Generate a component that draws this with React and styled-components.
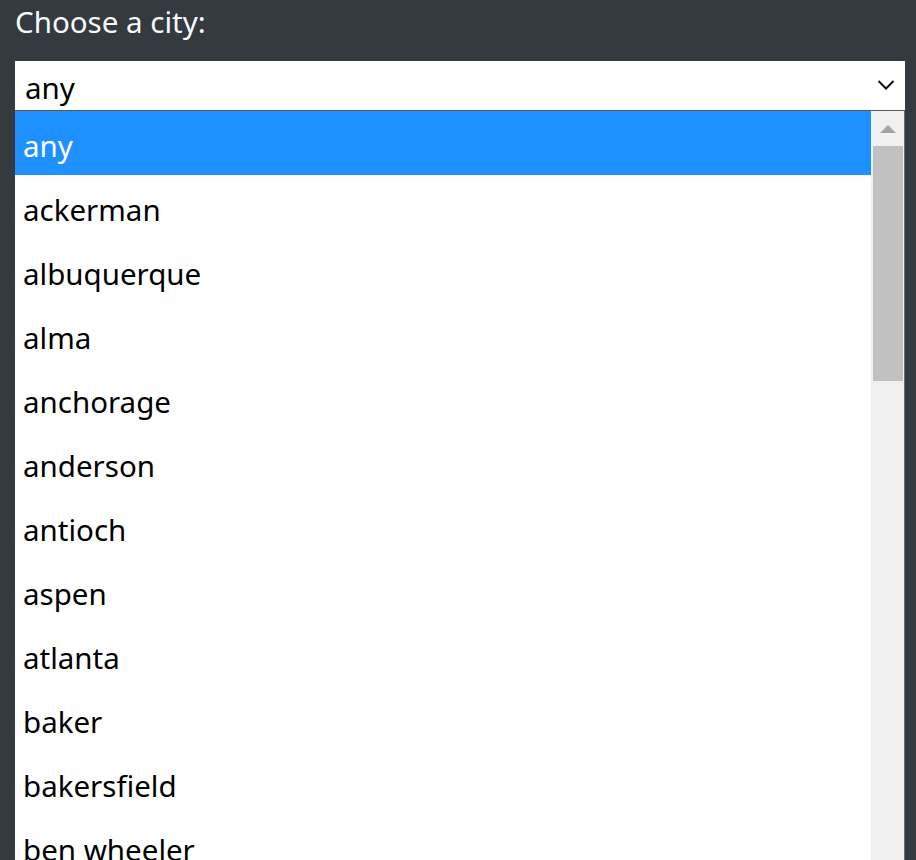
import React from "react";
import styled, { createGlobalStyle } from "styled-components";

const cities = [
  "any",
  "ackerman",
  "albuquerque",
  "alma",
  "anchorage",
  "anderson",
  "antioch",
  "aspen",
  "atlanta",
  "baker",
  "bakersfield",
  "ben wheeler",
  "berkeley",
];

const GlobalStyle = createGlobalStyle`
  html, body {
    margin: 0;
    padding: 0;
    background: #343a40;
    overflow: hidden;
  }
  body {
    font-family: "Noto Sans", "Open Sans", sans-serif;
  }
`;

const Page = styled.div`
  height: 860px;
  padding: 0 11px 0 15px;
  display: flex;
  flex-direction: column;
`;

const Label = styled.label`
  color: #f8f9fa;
  font-size: 29.5px;
  line-height: 44px;
  margin-bottom: 17px;
`;

const SelectBox = styled.div`
  height: 50px;
  background: #fff;
  border-bottom: 1px solid #5a5a5a;
  display: flex;
  align-items: center;
  justify-content: space-between;
  padding: 3px 10px 0 10px;
  box-sizing: border-box;
  font-size: 29.5px;
  color: #000;
`;

const Chevron = styled.svg`
  width: 18px;
  height: 12px;
  margin-bottom: 4px;
`;

const ListBox = styled.div`
  flex: 1;
  display: flex;
  background: #fff;
  border-right: 1px solid #6c6c6c;
  overflow: hidden;
`;

const Options = styled.ul`
  list-style: none;
  margin: 0;
  padding: 0;
  flex: 1;
`;

const Option = styled.li`
  height: 64px;
  display: flex;
  align-items: center;
  padding: 5px 0 0 8px;
  box-sizing: border-box;
  font-size: 29.5px;
  color: ${(p) => (p.selected ? "#fff" : "#000")};
  background: ${(p) => (p.selected ? "#1e90ff" : "transparent")};
`;

const Track = styled.div`
  width: 33px;
  background: #f0f0f0;
  display: flex;
  flex-direction: column;
  align-items: center;
`;

const ArrowUp = styled.div`
  margin-top: 14px;
  width: 0;
  height: 0;
  border-left: 8px solid transparent;
  border-right: 8px solid transparent;
  border-bottom: 8px solid #a3a3a3;
`;

const Thumb = styled.div`
  margin-top: 13px;
  width: 30px;
  height: 235px;
  background: #c1c1c1;
`;

export default function App() {
  return (
    <Page>
      <GlobalStyle />
      <Label>Choose a city:</Label>
      <SelectBox>
        <span>any</span>
        <Chevron viewBox="0 0 18 12">
          <path d="M1.5 2 L9 9.5 L16.5 2" fill="none" stroke="#111" strokeWidth="2" />
        </Chevron>
      </SelectBox>
      <ListBox>
        <Options>
          {cities.map((c, i) => (
            <Option key={c} selected={i === 0}>
              {c}
            </Option>
          ))}
        </Options>
        <Track>
          <ArrowUp />
          <Thumb />
        </Track>
      </ListBox>
    </Page>
  );
}
